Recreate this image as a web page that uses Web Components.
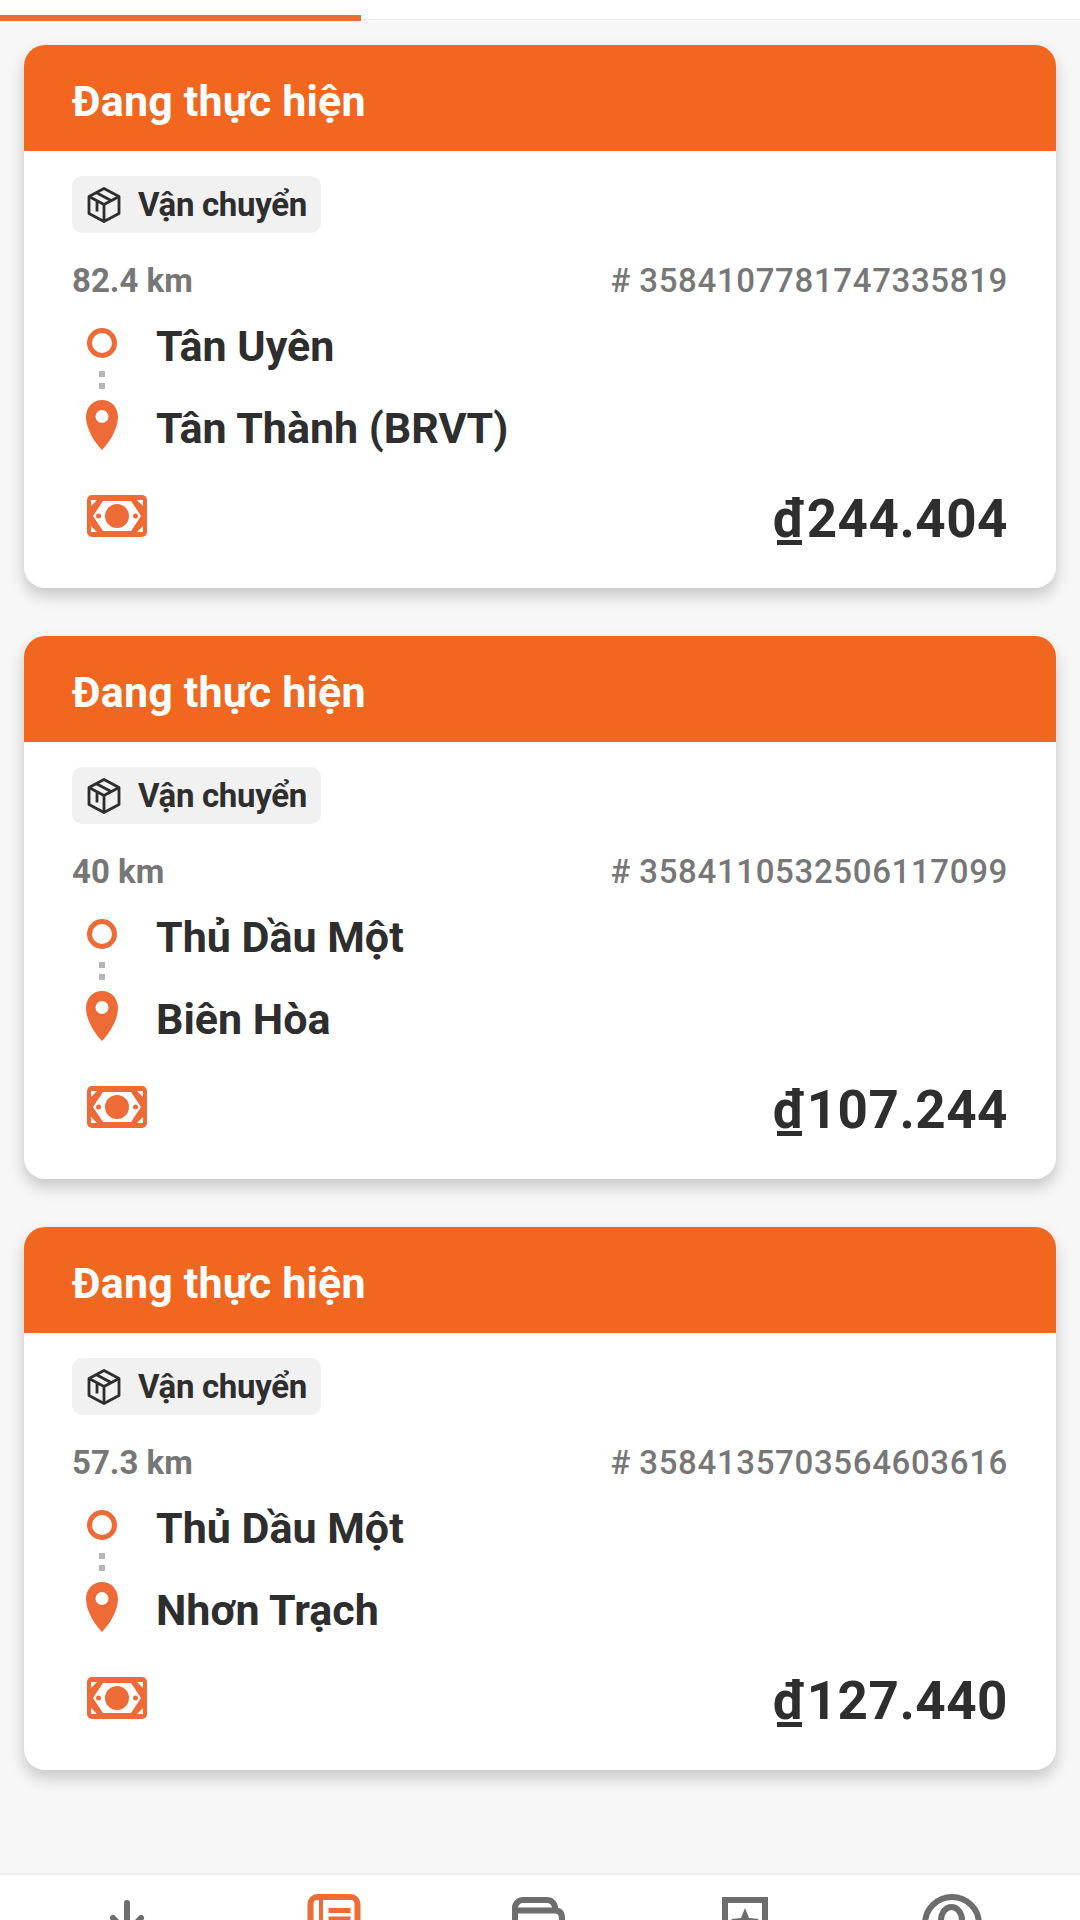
<!DOCTYPE html>
<html lang="vi">
<head>
<meta charset="utf-8">
<title>Đơn hàng</title>
<style>
  html, body { margin: 0; height: 1920px; overflow: hidden; background: #f7f7f7; font-family: Roboto, "Noto Sans", sans-serif; }
  body { display: flex; flex-direction: column; }
</style>
</head>
<body>
<tab-strip></tab-strip>
<order-list>
  <order-card km="82.4 km" code="3584107781747335819" from="Tân Uyên" to="Tân Thành (BRVT)" price="244.404"></order-card>
  <order-card km="40 km" code="3584110532506117099" from="Thủ Dầu Một" to="Biên Hòa" price="107.244"></order-card>
  <order-card km="57.3 km" code="3584135703564603616" from="Thủ Dầu Một" to="Nhơn Trạch" price="127.440"></order-card>
</order-list>
<bottom-nav></bottom-nav>

<script>
class TabStrip extends HTMLElement {
  constructor() {
    super();
    this.attachShadow({ mode: "open" }).innerHTML = `
      <style>
        :host { display: block; height: 19px; background: #fff; border-bottom: 1px solid #ececec; }
        div { width: 361px; height: 6px; position: relative; top: 15px; background: #ee6a36; }
      </style>
      <div></div>`;
  }
}

class OrderList extends HTMLElement {
  constructor() {
    super();
    this.attachShadow({ mode: "open" }).innerHTML = `
      <style>
        :host { display: flex; flex-direction: column; gap: 48px; padding: 25px 24px 0; flex: 1; }
      </style>
      <slot></slot>`;
  }
}

class OrderCard extends HTMLElement {
  constructor() {
    super();
    const a = (n) => this.getAttribute(n);
    this.attachShadow({ mode: "open" }).innerHTML = `
      <style>
        :host { display: block; height: 543px; background: #fff; border-radius: 21px; box-shadow: 0 8px 16px rgba(0,0,0,.2); color: #2e2e2e; }
        .head { height: 106px; box-sizing: border-box; display: flex; align-items: center; padding: 5px 48px 0; background: #f1671f; border-radius: 21px 21px 0 0; color: #fff; font-size: 43px; font-weight: 700; letter-spacing: .15px; }
        .body { padding: 25px 48px 0; }
        .tag { display: inline-flex; align-items: center; gap: 16px; height: 57px; box-sizing: border-box; padding: 0 14px; background: #f1f1f1; border-radius: 10px; font-size: 33px; font-weight: 700; letter-spacing: -.3px; vertical-align: top; }
        .meta { display: flex; justify-content: space-between; margin-top: 30px; color: #777; font-size: 33px; font-weight: 700; line-height: 36px; }
        .code { letter-spacing: .65px; font-weight: 500; word-spacing: -.5px; }
        .route { display: grid; grid-template-columns: 84px 1fr; grid-template-rows: 46px 36px 46px; margin-top: 21px; }
        .stop { display: flex; align-items: center; padding-top: 6px; font-size: 43px; font-weight: 700; white-space: nowrap; }
        .mark { display: flex; justify-content: center; width: 60px; height: 46px; align-items: center; }
        .dots { display: flex; flex-direction: column; gap: 6px; width: 60px; align-items: center; padding-top: 5px; }
        .dots i { width: 6px; height: 6px; background: #b5b5b5; }
        .foot { display: flex; justify-content: space-between; align-items: center; margin-top: 37px; height: 62px; }
        .money { margin-left: 15px; }
        .price { padding-top: 5px; font-size: 53px; font-weight: 700; letter-spacing: .5px; }
        .cur { background: linear-gradient(#2e2e2e, #2e2e2e) no-repeat 50% calc(100% - 5px) / 25px 5px; }
        svg { display: block; flex: none; }
      </style>
      <div class="head">Đang thực hiện</div>
      <div class="body">
        <div class="tag">
          <svg width="36" height="36" viewBox="0 0 36 36" fill="none" stroke="#2e2e2e" stroke-width="2.8" stroke-linejoin="round"><path d="M18 1.500 33 9.500v17L18 34.500 3 26.500v-17Z"/><path d="M3 9.500l15 8 15-8M18 17.500v17M10 5.500l15 8M11 13.500v11"/></svg>
          Vận chuyển
        </div>
        <div class="meta"><span>${a("km")}</span><span class="code"># ${a("code")}</span></div>
        <div class="route">
          <div class="mark"><svg width="30" height="30" viewBox="0 0 30 30"><circle cx="15" cy="15" r="12.500" fill="none" stroke="#ee6a36" stroke-width="5"/></svg></div>
          <div class="stop">${a("from")}</div>
          <div class="dots"><i></i><i></i></div>
          <div></div>
          <div class="mark"><svg width="32" height="50" viewBox="0 0 32 50"><path fill="#ee6a36" fill-rule="evenodd" d="M16 0C7 0 0 7 0 17c0 12 9 26 16 33 7-7 16-21 16-33C32 7 25 0 16 0Zm0 10a6.500 6.500 0 1 1 0 13 6.500 6.500 0 0 1 0-13Z"/></svg></div>
          <div class="stop">${a("to")}</div>
        </div>
        <div class="foot">
          <svg class="money" width="60" height="42" viewBox="0 0 60 42">
            <rect width="60" height="42" rx="5" fill="#ee6a36"/>
            <path fill="#fff" d="M4 5h6l-6 6ZM56 5h-6l6 6ZM4 37h6l-6-6ZM56 37h-6l6-6Z"/>
            <path fill="#fff" d="M16 6h28l10 15-10 15H16L6 21Z"/>
            <circle cx="30" cy="21" r="12" fill="#ee6a36"/>
            <circle cx="11.500" cy="21" r="2.500" fill="#ee6a36"/>
            <circle cx="48.500" cy="21" r="2.500" fill="#ee6a36"/>
          </svg>
          <span class="price"><span class="cur">đ</span>${a("price")}</span>
        </div>
      </div>`;
  }
}

class BottomNav extends HTMLElement {
  constructor() {
    super();
    const g = "#6d6d6d", o = "#ee6a36";
    this.attachShadow({ mode: "open" }).innerHTML = `
      <style>
        :host { display: grid; grid-template-columns: repeat(5, 1fr); height: 47px; padding: 0 24px; box-sizing: border-box; background: #fff; border-top: 2px solid #eee; overflow: hidden; flex: none; }
        .item { display: flex; justify-content: center; }
        svg { display: block; flex: none; }
      </style>
      <div class="item"><svg width="70" height="45" viewBox="0 0 70 45" fill="none" stroke="${g}" stroke-width="6" stroke-linecap="round"><path d="M35 28v30M21 43l14 15 14-15"/></svg></div>
      <div class="item"><svg width="70" height="45" viewBox="0 0 70 45" fill="none"><rect x="11.500" y="22" width="47" height="44" rx="7" stroke="${o}" stroke-width="6"/><path d="M22 22v44" stroke="${o}" stroke-width="4"/><path d="M29.500 35.500h22M29.500 44h22" stroke="${o}" stroke-width="5"/></svg></div>
      <div class="item"><svg width="70" height="45" viewBox="0 0 70 45" fill="none" stroke="${g}" stroke-width="6"><path d="M10 60V33a8 8 0 0 1 8-8h24a8 8 0 0 1 8 8v2.500"/><path d="M10 35.500h40q7 0 7 8V60"/></svg></div>
      <div class="item"><svg width="70" height="45" viewBox="0 0 70 45"><path fill="none" stroke="${g}" stroke-width="6" d="M14 60V25h40v35"/><path fill="${g}" d="m34 33 4 10 10 1-8 6 3 10-9-6-9 6 3-10-8-6 10-1Z"/></svg></div>
      <div class="item"><svg width="70" height="45" viewBox="0 0 70 45" fill="none" stroke="${g}" stroke-width="6"><circle cx="34" cy="49" r="27"/><ellipse cx="33.500" cy="45" rx="10.500" ry="13"/></svg></div>`;
  }
}

customElements.define("tab-strip", TabStrip);
customElements.define("order-list", OrderList);
customElements.define("order-card", OrderCard);
customElements.define("bottom-nav", BottomNav);
</script>
</body>
</html>
